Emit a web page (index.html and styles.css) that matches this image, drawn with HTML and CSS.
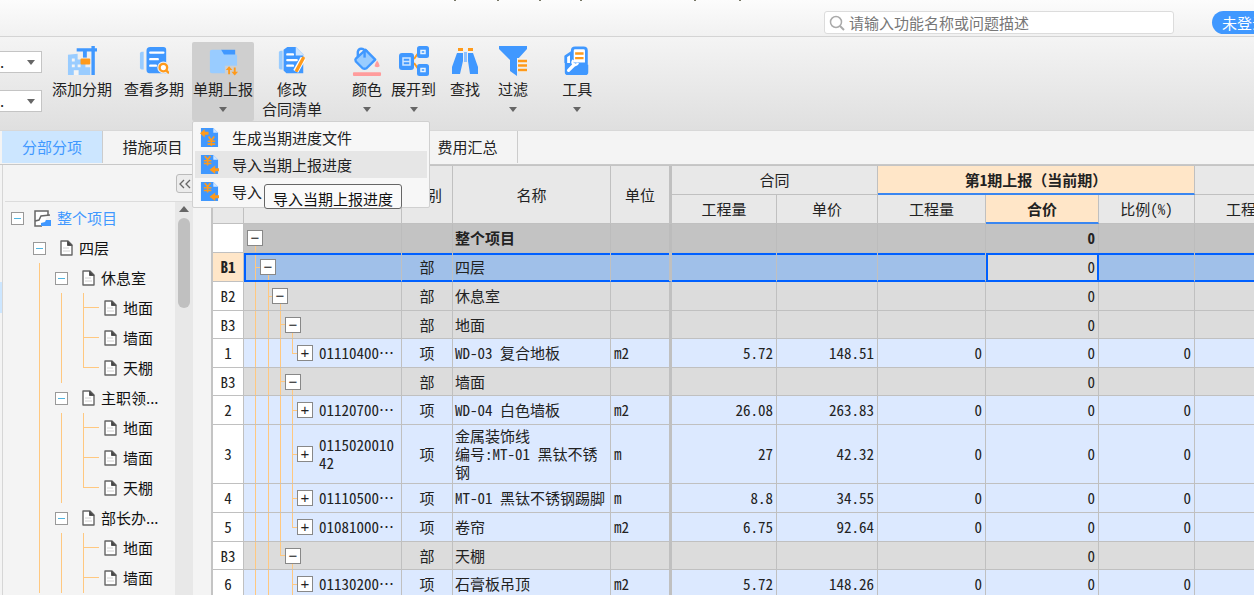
FILE: index.html
```html
<!DOCTYPE html>
<html lang="zh-CN">
<head>
<meta charset="utf-8">
<title>进度计量</title>
<link rel="stylesheet" href="styles.css">
</head>
<body>
<svg class="defs" width="0" height="0" aria-hidden="true">
  <symbol id="file" viewBox="0 0 13 16"><path d="M1 1h7l4 4v10H1z" fill="#fff" stroke="#666" stroke-width="1.4" stroke-linejoin="round"/><path d="M7.5 1v4.500H12z" fill="#444" stroke="#555"/><path d="M3 8h6M3 11h7" stroke="#d0d0d0"/></symbol>
  <symbol id="caret" viewBox="0 0 8 5"><path d="M0 0h8L4 5z" fill="#666"/></symbol>
  <symbol id="yuan-file" viewBox="0 0 20 22"><path d="M1 1h13l5 5v15H1z" fill="#4098ff"/><path d="M14 1v5h5z" fill="#cfe6ff"/></symbol>
  <symbol id="import" viewBox="0 0 20 22"><use href="#yuan-file"/><path d="M5 2l3 4 3-4M8 6v6M4 7h8M4 10h8" stroke="#ff9a1a" stroke-width="1.700" fill="none"/><path d="M20 15h-4v-3l-6 4.500 6 4.500v-3h4z" fill="#ff9a1a"/></symbol>
  <symbol id="export" viewBox="0 0 20 22"><use href="#yuan-file"/><path d="M9 10l3 4 3-4M12 14v6M8 15h8M8 18h8" stroke="#ff9a1a" stroke-width="1.700" fill="none"/><path d="M9 5H5V2L0 6.500 5 11V8h4z" fill="#ff9a1a"/></symbol>
</svg>

<header class="titlebar">
  <svg class="ticks" width="290" height="1" viewBox="0 0 290 1" aria-hidden="true"><path d="M0 0h2v1H0zM43 0h2v1h-2zM85 0h2v1h-2zM126 0h2v1h-2zM240 0h2v1h-2zM285 0h2v1h-2z" fill="#776"/></svg>
  <label class="search">
    <svg width="16" height="16" viewBox="0 0 16 16"><circle cx="7" cy="7" r="5.500" fill="none" stroke="#aaa" stroke-width="1.500"/><path d="M11 11l4 4" stroke="#aaa" stroke-width="2"/></svg>
    <input type="text" placeholder="请输入功能名称或问题描述" aria-label="搜索">
  </label>
  <button class="login">未登录</button>
</header>

<nav class="ribbon">
  <div class="pickers">
    <div class="picker"><select aria-label="项目"><option>.</option></select><svg width="8" height="5"><use href="#caret"/></svg></div>
    <div class="picker"><select aria-label="分期"><option>.</option></select><svg width="8" height="5"><use href="#caret"/></svg></div>
  </div>
  <button class="tool near">
    <svg viewBox="1 1 31 31"><path d="M2 10l10-1v6h8v8h5v8H2z" fill="#99ccff"/><path d="M8 31v-5h5v5z" fill="#f4f4f4"/><path d="M6 14h3v3H6zM6 20h3v3H6zM12 20h3v3h-3z" fill="#f4f4f4"/><path d="M11 5h21M28 1v30" stroke="#4098ff" stroke-width="3.500" fill="none"/><path d="M19.500 5v8" stroke="#4098ff" stroke-width="4"/><rect x="15" y="14" width="10" height="6" rx="1" fill="#ff9a1a"/></svg>
    <span>添加分期</span>
  </button>
  <button class="tool near">
    <svg viewBox="0 1 32 32"><path d="M1 9q0-2 2-2h2v19H3q-2 0-2-2z" fill="#99ccff"/><path d="M8 6q0-4 4-4h14q3 0 3 3v25H11q-3 0-3-4z" fill="#4098ff"/><path d="M12 8h14M12 15h8M12 22h6" stroke="#fff" stroke-width="2.500" stroke-linecap="round"/><circle cx="26" cy="24" r="4" fill="#fff" stroke="#eee" stroke-width="5"/><circle cx="26" cy="24" r="4" fill="#fff" stroke="#ff9a1a" stroke-width="2.500"/><path d="M29 27l3 3" stroke="#ff9a1a" stroke-width="2.500"/></svg>
    <span>查看多期</span>
  </button>
  <div class="menu-anchor">
    <button class="tool active" aria-expanded="true">
      <svg viewBox="0 0 32 32"><path d="M14 4h15v13H14z" fill="#4098ff"/><path d="M2 6q0-2 2-2h10l3 5h13q1 0 1 2v16q0 2-2 2H4q-2 0-2-2z" fill="#99ccff"/><path d="M18 21h14v9H18z" fill="#cfcfcf"/><path d="M22.500 30v-6M28.500 23v6" stroke="#ff9a1a" stroke-width="2"/><path d="M19 25.500l3.500-4 3.500 4zM25 27.500l3.500 4 3.500-4z" fill="#ff9a1a"/></svg>
      <span>单期上报</span>
      <svg class="caret" width="8" height="5"><use href="#caret"/></svg>
    </button>
    <ul class="menu">
      <li><button><svg width="19" height="21"><use href="#export"/></svg>生成当期进度文件</button></li>
      <li class="hover"><button><svg width="19" height="21"><use href="#import"/></svg>导入当期上报进度</button><div class="tip" role="tooltip">导入当期上报进度</div></li>
      <li><button><svg width="19" height="21"><use href="#import"/></svg>导入</button></li>
    </ul>
  </div>
  <button class="tool">
    <svg viewBox="0 1 32 32"><path d="M2 8q0-2 2-2h2v20H4q-2 0-2-2z" fill="#99ccff"/><path d="M7 5l4-3h9l8 8v20H10l-3-3z" fill="#4098ff"/><path d="M20 2l9 9h-9z" fill="#cfe6ff"/><path d="M11 10h6M11 16h10M11 22h6" stroke="#fff" stroke-width="2.500" stroke-linecap="round"/><path d="M28 14l-8 14" stroke="#fff" stroke-width="6"/><path d="M28 14l-7 13" stroke="#ff9a1a" stroke-width="3.500" stroke-linecap="round"/></svg>
    <span>修改<br>合同清单</span>
  </button>
  <button class="tool apart">
    <svg viewBox="1 0 31 31"><path d="M7 11V6q1-4 5-3l5 3" stroke="#4098ff" stroke-width="2.500" fill="none"/><path d="M15 4l10 10-9 9q-2 1-4 0l-7-7q-1-2 0-3z" fill="#99ccff" stroke="#4098ff" stroke-width="2.500" stroke-linejoin="round"/><path d="M14 4v8" stroke="#4098ff" stroke-width="2.500"/><path d="M27 15q5 7 0 7t0-7z" fill="#ff9c9c"/><rect x="2" y="27" width="29" height="4" rx="1" fill="#ff9c9c"/></svg>
    <span>颜色</span>
    <svg class="caret" width="8" height="5"><use href="#caret"/></svg>
  </button>
  <button class="tool">
    <svg viewBox="1 1 30 30"><path d="M16 14l5-7M16 18l5 7" stroke="#ff9a1a" stroke-width="2"/><rect x="1" y="8" width="15" height="17" rx="3" fill="#4098ff"/><path d="M5 13h7v7H5zM5 16.500h7" fill="none" stroke="#cfe6ff" stroke-width="1.500"/><rect x="19" y="1" width="12" height="12" rx="2.500" fill="#4098ff"/><rect x="19" y="19" width="12" height="12" rx="2.500" fill="#4098ff"/><path d="M23 5.500h4v3h-4zM23 23.500h4v3h-4z" fill="none" stroke="#e8f4ff" stroke-width="1.500"/></svg>
    <span>展开到</span>
    <svg class="caret" width="8" height="5"><use href="#caret"/></svg>
  </button>
  <button class="tool mid">
    <svg viewBox="1 1 30 30"><path d="M8 8h6v8l-3 13H3V22zM24 8h-5v8l2 13h8v-7z" fill="#4098ff"/><path d="M15 7h3v10h-3z" fill="#8fc2ff"/><path d="M9 3h5v3H9zM19 3h5v3h-5z" fill="#ff9a1a"/></svg>
    <span>查找</span>
  </button>
  <button class="tool wide">
    <svg viewBox="1 1 30 30"><path d="M2 1h28v3L20 15v16l-7-5V15L2 4z" fill="#4098ff"/><path d="M20 15h10M20 20h10M20 25h10" stroke="#f2f2f2" stroke-width="4"/><path d="M21 16h9M21 20.500h9M21 25h9" stroke="#ff9a1a" stroke-width="2.500"/></svg>
    <span>过滤</span>
    <svg class="caret" width="8" height="5"><use href="#caret"/></svg>
  </button>
  <button class="tool far">
    <svg viewBox="1 0 32 32"><path d="M5 18V11l6-4v12" fill="#fff" stroke="#4098ff" stroke-width="3" stroke-linejoin="round"/><path d="M12 5q0-3 3-3h9q3 0 3 3v14H12z" fill="#fff" stroke="#4098ff" stroke-width="3"/><path d="M15 8h9M15 13h9" stroke="#ff9a1a" stroke-width="2.500"/><path d="M4 18h11l3 2h11v8q0 3-3 3H7q-3 0-3-3z" fill="#4098ff"/><path d="M8 26l6-6" stroke="#fff" stroke-width="3.500" stroke-linecap="round"/><path d="M13 15q-2 4 1 5t4-2" stroke="#fff" stroke-width="2.500" fill="none"/></svg>
    <span>工具</span>
    <svg class="caret" width="8" height="5"><use href="#caret"/></svg>
  </button>
</nav>

<nav class="tabs" role="tablist">
  <button role="tab" aria-selected="true" class="tab current">分部分项</button>
  <button role="tab" class="tab">措施项目</button>
  <div class="tab-rest"></div>
  <button role="tab" class="tab">费用汇总</button>
</nav>

<main class="work">
  <div class="rail"><div class="rail-mark"></div></div>
  <aside class="side">
    <div class="side-head"><button class="collapse" aria-label="收起"><svg width="12" height="10" viewBox="0 0 12 10"><path d="M5 1L1 5l4 4M11 1L7 5l4 4" fill="none" stroke="#666" stroke-width="1.300"/></svg></button></div>
    <div class="side-body">
      <div class="tree">
        <div class="node root"><i class="toggle"></i><span class="ico"><svg width="17" height="17" viewBox="0 0 17 17"><path d="M14 5V1H1v15h7" fill="#fff" stroke="#666" stroke-width="1.500"/><path d="M1 11l4-1 2-4 9-1" fill="none" stroke="#666" stroke-width="1.500"/><path d="M7 16v-3l4-1 1-2h5v6z" fill="#4098ff"/></svg></span>整个项目</div>
        <div class="node"><i></i><i class="toggle"></i><span class="ico"><svg width="13" height="16"><use href="#file"/></svg></span>四层</div>
        <div class="node"><i></i><i class="line"></i><i class="toggle"></i><span class="ico"><svg width="13" height="16"><use href="#file"/></svg></span>休息室</div>
        <div class="node"><i></i><i class="line"></i><i class="line"></i><i class="line tee"></i><span class="ico"><svg width="13" height="16"><use href="#file"/></svg></span>地面</div>
        <div class="node"><i></i><i class="line"></i><i class="line"></i><i class="line tee"></i><span class="ico"><svg width="13" height="16"><use href="#file"/></svg></span>墙面</div>
        <div class="node"><i></i><i class="line"></i><i class="line"></i><i class="line tee last"></i><span class="ico"><svg width="13" height="16"><use href="#file"/></svg></span>天棚</div>
        <div class="node"><i></i><i class="line"></i><i class="toggle"></i><span class="ico"><svg width="13" height="16"><use href="#file"/></svg></span>主职领...</div>
        <div class="node"><i></i><i class="line"></i><i class="line"></i><i class="line tee"></i><span class="ico"><svg width="13" height="16"><use href="#file"/></svg></span>地面</div>
        <div class="node"><i></i><i class="line"></i><i class="line"></i><i class="line tee"></i><span class="ico"><svg width="13" height="16"><use href="#file"/></svg></span>墙面</div>
        <div class="node"><i></i><i class="line"></i><i class="line"></i><i class="line tee last"></i><span class="ico"><svg width="13" height="16"><use href="#file"/></svg></span>天棚</div>
        <div class="node"><i></i><i class="line"></i><i class="toggle"></i><span class="ico"><svg width="13" height="16"><use href="#file"/></svg></span>部长办...</div>
        <div class="node"><i></i><i class="line"></i><i class="line"></i><i class="line tee"></i><span class="ico"><svg width="13" height="16"><use href="#file"/></svg></span>地面</div>
        <div class="node"><i></i><i class="line"></i><i class="line"></i><i class="line tee"></i><span class="ico"><svg width="13" height="16"><use href="#file"/></svg></span>墙面</div>
      </div>
      <div class="scroll"><svg width="10" height="6" viewBox="0 0 10 6"><path d="M0 6h10L5 0z" fill="#666"/></svg><div class="thumb"></div></div>
    </div>
  </aside>

  <div class="grid-wrap">
    <table class="grid">
      <colgroup><col class="c-no"><col class="c-code"><col class="c-kind"><col><col class="c-unit"><col class="c-qty"><col class="c-price"><col class="c-qty2"><col class="c-total"><col class="c-rate"><col class="c-qty2"></colgroup>
      <thead>
        <tr><th rowspan="2"></th><th rowspan="2"></th><th rowspan="2">类别</th><th rowspan="2">名称</th><th rowspan="2" class="fix">单位</th><th colspan="2">合同</th><th colspan="3" class="hot">第1期上报（当前期）</th><th></th></tr>
        <tr><th>工程量</th><th>单价</th><th>工程量</th><th class="hot">合价</th><th>比例(%)</th><th>工程量</th></tr>
      </thead>
      <tbody>
        <tr class="total"><th></th><td class="code l0"><b class="box">−</b></td><td></td><td class="name">整个项目</td><td class="fix"></td><td></td><td></td><td></td><td>0</td><td></td><td></td></tr>
        <tr class="sel"><th>B1</th><td class="code l1"><b class="box">−</b></td><td class="kind">部</td><td class="name">四层</td><td class="fix"></td><td></td><td></td><td></td><td class="cell">0</td><td></td><td></td></tr>
        <tr class="group"><th>B2</th><td class="code l2"><b class="box">−</b></td><td class="kind">部</td><td class="name">休息室</td><td class="fix"></td><td></td><td></td><td></td><td>0</td><td></td><td></td></tr>
        <tr class="group sub"><th>B3</th><td class="code l3"><b class="box">−</b></td><td class="kind">部</td><td class="name">地面</td><td class="fix"></td><td></td><td></td><td></td><td>0</td><td></td><td></td></tr>
        <tr><th>1</th><td class="code l4 end"><div><b class="box">+</b><span>01110400…</span></div></td><td class="kind">项</td><td class="name">WD-03 复合地板</td><td class="fix">m2</td><td>5.72</td><td>148.51</td><td>0</td><td>0</td><td>0</td><td></td></tr>
        <tr class="group sub"><th>B3</th><td class="code l3"><b class="box">−</b></td><td class="kind">部</td><td class="name">墙面</td><td class="fix"></td><td></td><td></td><td></td><td>0</td><td></td><td></td></tr>
        <tr><th>2</th><td class="code l4"><div><b class="box">+</b><span>01120700…</span></div></td><td class="kind">项</td><td class="name">WD-04 白色墙板</td><td class="fix">m2</td><td>26.08</td><td>263.83</td><td>0</td><td>0</td><td>0</td><td></td></tr>
        <tr class="tall"><th>3</th><td class="code l4"><div><b class="box">+</b><span>011502001042</span></div></td><td class="kind">项</td><td class="name">金属装饰线<br>编号:MT-01 黑钛不锈钢</td><td class="fix">m</td><td>27</td><td>42.32</td><td>0</td><td>0</td><td>0</td><td></td></tr>
        <tr><th>4</th><td class="code l4"><div><b class="box">+</b><span>01110500…</span></div></td><td class="kind">项</td><td class="name">MT-01 黑钛不锈钢踢脚</td><td class="fix">m</td><td>8.8</td><td>34.55</td><td>0</td><td>0</td><td>0</td><td></td></tr>
        <tr><th>5</th><td class="code l4 end"><div><b class="box">+</b><span>01081000…</span></div></td><td class="kind">项</td><td class="name">卷帘</td><td class="fix">m2</td><td>6.75</td><td>92.64</td><td>0</td><td>0</td><td>0</td><td></td></tr>
        <tr class="group sub"><th>B3</th><td class="code l3 end"><b class="box">−</b></td><td class="kind">部</td><td class="name">天棚</td><td class="fix"></td><td></td><td></td><td></td><td>0</td><td></td><td></td></tr>
        <tr><th>6</th><td class="code l4 short"><div><b class="box">+</b><span>01130200…</span></div></td><td class="kind">项</td><td class="name">石膏板吊顶</td><td class="fix">m2</td><td>5.72</td><td>148.26</td><td>0</td><td>0</td><td>0</td><td></td></tr>
      </tbody>
    </table>
  </div>
</main>
</body>
</html>
```
FILE: styles.css
```css
* { box-sizing: border-box; }
html, body { height: 100%; }
body {
  margin: 0;
  display: flex;
  flex-direction: column;
  overflow: hidden;
  background: #f4f4f4;
  color: #222;
  font: 15px/20px "Noto Sans CJK SC", sans-serif;
}
button, input, select { font: inherit; color: inherit; margin: 0; }
button { border: 0; padding: 0; background: none; white-space: nowrap; }
.defs { position: absolute; }

/* title bar */
.titlebar {
  position: relative;
  flex: none;
  display: flex;
  justify-content: flex-end;
  height: 37px;
  padding-top: 11px;
  overflow: hidden;
  background: linear-gradient(#fcfcfc, #f1f1f1);
  border-bottom: 1px solid #d4d4d4;
}
.ticks { position: absolute; top: 0; left: 454px; }
.search {
  display: flex;
  align-items: center;
  gap: 4px;
  width: 350px;
  height: 23px;
  margin-right: 38px;
  padding-left: 4px;
  background: #fff;
  border: 1px solid #dcdcdc;
  border-radius: 3px;
}
.search input { flex: 1; min-width: 0; height: 20px; padding: 0; border: 0; outline: 0; background: none; }
.search input::placeholder { color: #777; opacity: 1; }
.login {
  width: 64px;
  height: 23px;
  margin-right: -22px;
  padding-left: 10px;
  text-align: left;
  color: #fff;
  background: #4098ff;
  border-radius: 12px;
}

/* ribbon */
.ribbon {
  flex: none;
  display: flex;
  align-items: flex-start;
  height: 93px;
  padding-top: 5px;
  background: linear-gradient(#f4f4f4, #dfdfdf);
}
.pickers { display: grid; gap: 17px; width: 41px; padding-top: 9px; }
.picker { display: grid; align-items: center; }
.picker select, .picker svg { grid-area: 1 / 1; }
.picker svg { justify-self: end; margin-right: 7px; }
.picker select {
  width: 42px;
  height: 22px;
  padding: 0;
  appearance: none;
  background: #fff;
  border: 1px solid #c4c4c4;
  border-left: 0;
  border-radius: 0;
}
.tool {
  display: flex;
  flex-direction: column;
  align-items: center;
  height: 79px;
  margin-left: 7px;
  padding: 4px 1px 0;
  border-radius: 2px;
}
.tool span { margin-top: 3px; }
.tool svg { flex: none; width: 30px; height: 30px; }
.tool .caret { width: 8px; height: 5px; margin-top: 8px; }
.tool.near { margin-left: 10px; }
.tool.mid { margin-left: 12px; }
.tool.wide { margin-left: 16px; }
.tool.apart { margin-left: 28px; }
.tool.far { margin-left: 32px; }
.tool.active { background: #cfcfcf; }
.menu-anchor { position: relative; }

/* drop-down menu */
.menu {
  position: absolute;
  z-index: 2;
  top: 79px;
  left: 7px;
  width: 238px;
  margin: 0;
  padding: 2px;
  list-style: none;
  background: #f7f7f7;
  border: 1px solid #d0d0d0;
  border-radius: 2px;
}
.menu li { position: relative; }
.menu button { display: flex; align-items: center; gap: 13px; width: 100%; height: 27px; padding-left: 5px; }
.menu .hover { z-index: 1; background: #e6e6e6; }
.tip {
  position: absolute;
  top: 33px;
  left: 69px;
  height: 25px;
  padding: 4px 8px 0;
  overflow: hidden;
  white-space: nowrap;
  color: #111;
  background: #fafafa;
  border: 1px solid #666;
  border-radius: 3px;
}

/* tabs */
.tabs {
  flex: none;
  display: flex;
  height: 35px;
  padding: 0 0 1px 2px;
  border-top: 1px solid #d8d8d8;
  border-bottom: 1px solid #c8c8c8;
}
.tab { width: 100px; padding-bottom: 1px; border-right: 1px solid #ccc; }
.tab.current { width: 101px; color: #4098ff; background: #cce6ff; }
.tab-rest { width: 215px; }

/* side panel */
.work { flex: 1; display: flex; min-height: 0; }
.rail { flex: none; width: 3px; padding-top: 117px; border-right: 1px solid #d6d6d6; }
.rail-mark { height: 31px; background: #cce6ff; }
.side { flex: none; display: flex; flex-direction: column; width: 190px; }
.side-head {
  flex: none;
  display: flex;
  justify-content: flex-end;
  height: 37px;
  margin-left: 2px;
  padding-top: 9px;
  border-bottom: 1px solid #dcdcdc;
}
.collapse { width: 17px; height: 19px; background: #ececec; border: 1px solid #bbb; border-radius: 3px 0 0 3px; line-height: 10px; }
.side-body { flex: 1; display: flex; min-height: 0; overflow: hidden; }
.tree { flex: 1; padding: 1px 0 0 3px; color: #111; }
.node { display: flex; align-items: center; height: 30px; white-space: nowrap; }
.node.root { color: #4098ff; }
.node i { flex: none; display: flex; align-items: center; justify-content: center; width: 22px; height: 30px; }
.toggle::before { content: ""; width: 11px; height: 11px; border: 1px solid #999; background: linear-gradient(#4fb4e0, #4fb4e0) center / 7px 1px no-repeat #fff; }
.node .line { justify-content: flex-start; align-items: flex-start; padding-left: 11px; }
.line::before { content: ""; flex: none; width: 1px; height: 30px; background: #ffc880; }
.tee::after { content: ""; flex: none; width: 15px; height: 1px; margin-top: 14px; background: #ffc880; }
.last::before { height: 15px; }
.ico { flex: none; display: flex; justify-content: flex-end; width: 29px; padding-right: 6px; }
.scroll { flex: none; display: flex; flex-direction: column; align-items: center; gap: 6px; width: 18px; padding-top: 4px; background: #e8e8e8; }
.thumb { width: 12px; height: 90px; border-radius: 6px; background: #c0c0c0; }

/* bill grid */
.grid-wrap { flex: 1; min-width: 0; margin-left: 18px; overflow: hidden; border-left: 2px solid #c4c4c4; }
.grid {
  width: 100%;
  min-width: 1090px;
  table-layout: fixed;
  border-collapse: separate;
  border-spacing: 0;
  border-top: 1px solid #c4c4c4;
  font: 15px/18px "Noto Sans Mono CJK SC", "Noto Sans CJK SC", monospace;
}
.c-no { width: 31px; }
.c-code { width: 158px; }
.c-kind { width: 51px; }
.c-unit { width: 61px; }
.c-qty { width: 105px; }
.c-price { width: 101px; }
.c-qty2 { width: 108px; }
.c-total { width: 113px; }
.c-rate { width: 96px; }
.grid th, .grid td {
  height: 29px;
  padding: 0 3px;
  font-weight: 400;
  text-align: right;
  border-right: 1px solid #c0c0c0;
  border-bottom: 1px solid #c0c0c0;
}
.grid th { padding: 0; text-align: center; }
.grid thead th { background: #e8e8e8; }
.grid tbody th { background: #fff; }
.grid tbody td { background-color: #dce9ff; }
.grid .fix { border-right: 3px solid #c0c0c0; }
.grid td.fix, .grid td.name, .grid td.code { text-align: left; }
.grid td.kind { text-align: center; }
.grid .name { padding: 0 2px; white-space: nowrap; }
.grid .tall td, .grid .tall th { height: 59px; }
.grid .tall .name { white-space: normal; }
.grid thead .hot { font-weight: 700; background: #ffe6c8; border-bottom: 2px solid #3a86f0; }
.grid .total td { background-color: #c3c3c3; border-right-color: #bcbcbc; font-weight: 700; }
.grid .group td { background-color: #dcdcdc; }
.grid .sub td, .grid .sub th { height: 28px; }
.grid .sel th { font-weight: 700; background: #ffe6c8; }
.grid .sel td { background-color: #a0c0e9; box-shadow: inset 0 2px #0060ff, inset 0 -1px #0060ff; border-bottom-color: #0060ff; }
.grid .sel td.code { box-shadow: inset 2px 2px #0060ff, inset 0 -1px #0060ff; }
.grid .sel td.cell { background-color: #dcdcdc; border-right-color: #0060ff; box-shadow: inset 2px 2px #0060ff, inset -1px -1px #0060ff; }

/* hierarchy guides inside the code column */
.grid td.code {
  --g: linear-gradient(#ffc880, #ffc880);
  padding: 0;
  background-repeat: no-repeat;
}
.code div { display: flex; align-items: center; }
.code span { width: 80px; margin-left: 6px; word-break: break-all; }
.box {
  flex: none;
  display: block;
  width: 16px;
  height: 16px;
  border: 1px solid #888;
  background: #fff;
  font: 15px/14px "Liberation Sans", sans-serif;
  text-align: center;
}
.l0 .box { margin-left: 3px; }
.l1 .box { margin-left: 16px; }
.l2 .box { margin-left: 28px; }
.l3 .box { margin-left: 41px; }
.l4 .box { margin-left: 53px; }
.l0 { background-image: var(--g); background-position: 11px 100%; background-size: 1px 50%; }
.l1 { background-image: var(--g), var(--g), var(--g); background-position: 11px 0, 11px 50%, 24px 100%; background-size: 1px 100%, 6px 1px, 1px 50%; }
.l2 { background-image: var(--g), var(--g), var(--g), var(--g); background-position: 11px 0, 24px 0, 24px 50%, 36px 100%; background-size: 1px 100%, 1px 100%, 6px 1px, 1px 50%; }
.l3 { background-image: var(--g), var(--g), var(--g), var(--g), var(--g); background-position: 11px 0, 24px 0, 36px 0, 36px 50%, 48px 100%; background-size: 1px 100%, 1px 100%, 1px 100%, 6px 1px, 1px 50%; }
.l3.end { background-size: 1px 100%, 1px 100%, 1px 50%, 6px 1px, 1px 50%; }
.l4 { background-image: var(--g), var(--g), var(--g), var(--g), var(--g); background-position: 11px 0, 24px 0, 36px 0, 48px 0, 48px 50%; background-size: 1px 100%, 1px 100%, 1px 100%, 1px 100%, 6px 1px; }
.l4.end { background-size: 1px 100%, 1px 100%, 1px 100%, 1px 50%, 6px 1px; }
.l4.short { background-size: 1px 100%, 1px 100%, 0 0, 1px 100%, 6px 1px; }
```
